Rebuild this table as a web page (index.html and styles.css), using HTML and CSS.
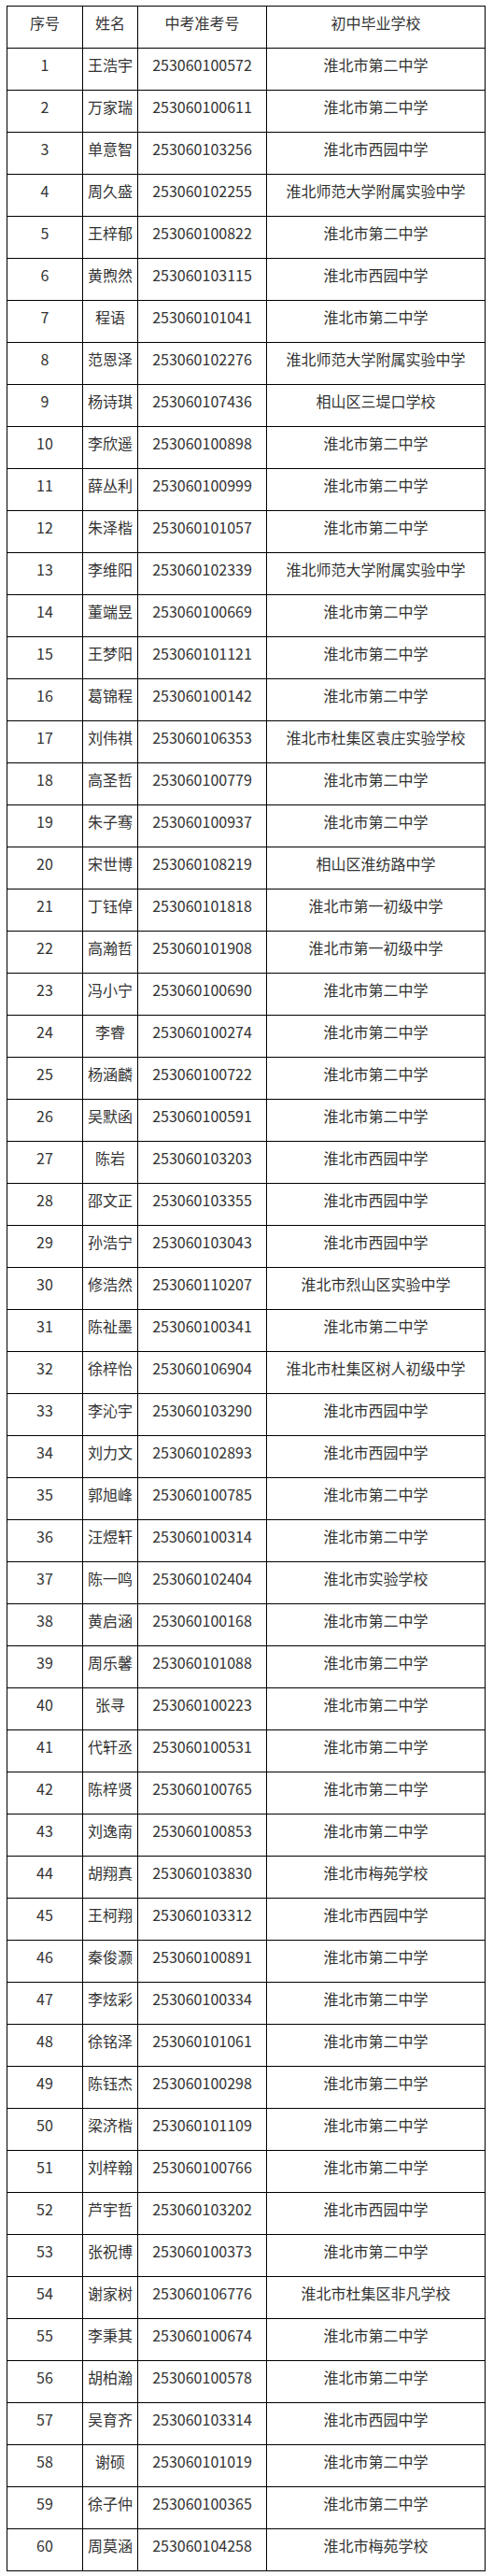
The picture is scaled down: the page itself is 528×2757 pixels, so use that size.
FILE: index.html
```html
<!DOCTYPE html>
<html lang="zh-CN">
<head>
<meta charset="utf-8">
<title>名单</title>
<link rel="stylesheet" href="styles.css">
</head>
<body>
<table class="roster">
<colgroup><col class="c1"><col class="c2"><col class="c3"><col class="c4"></colgroup>
<thead>
<tr><th>序号</th><th>姓名</th><th>中考准考号</th><th>初中毕业学校</th></tr>
</thead>
<tbody>
<tr><td>1</td><td>王浩宇</td><td>253060100572</td><td>淮北市第二中学</td></tr>
<tr><td>2</td><td>万家瑞</td><td>253060100611</td><td>淮北市第二中学</td></tr>
<tr><td>3</td><td>单意智</td><td>253060103256</td><td>淮北市西园中学</td></tr>
<tr><td>4</td><td>周久盛</td><td>253060102255</td><td>淮北师范大学附属实验中学</td></tr>
<tr><td>5</td><td>王梓郁</td><td>253060100822</td><td>淮北市第二中学</td></tr>
<tr><td>6</td><td>黄煦然</td><td>253060103115</td><td>淮北市西园中学</td></tr>
<tr><td>7</td><td>程语</td><td>253060101041</td><td>淮北市第二中学</td></tr>
<tr><td>8</td><td>范恩泽</td><td>253060102276</td><td>淮北师范大学附属实验中学</td></tr>
<tr><td>9</td><td>杨诗琪</td><td>253060107436</td><td>相山区三堤口学校</td></tr>
<tr><td>10</td><td>李欣遥</td><td>253060100898</td><td>淮北市第二中学</td></tr>
<tr><td>11</td><td>薛丛利</td><td>253060100999</td><td>淮北市第二中学</td></tr>
<tr><td>12</td><td>朱泽楷</td><td>253060101057</td><td>淮北市第二中学</td></tr>
<tr><td>13</td><td>李维阳</td><td>253060102339</td><td>淮北师范大学附属实验中学</td></tr>
<tr><td>14</td><td>董端昱</td><td>253060100669</td><td>淮北市第二中学</td></tr>
<tr><td>15</td><td>王梦阳</td><td>253060101121</td><td>淮北市第二中学</td></tr>
<tr><td>16</td><td>葛锦程</td><td>253060100142</td><td>淮北市第二中学</td></tr>
<tr><td>17</td><td>刘伟祺</td><td>253060106353</td><td>淮北市杜集区袁庄实验学校</td></tr>
<tr><td>18</td><td>高圣哲</td><td>253060100779</td><td>淮北市第二中学</td></tr>
<tr><td>19</td><td>朱子骞</td><td>253060100937</td><td>淮北市第二中学</td></tr>
<tr><td>20</td><td>宋世博</td><td>253060108219</td><td>相山区淮纺路中学</td></tr>
<tr><td>21</td><td>丁钰倬</td><td>253060101818</td><td>淮北市第一初级中学</td></tr>
<tr><td>22</td><td>高瀚哲</td><td>253060101908</td><td>淮北市第一初级中学</td></tr>
<tr><td>23</td><td>冯小宁</td><td>253060100690</td><td>淮北市第二中学</td></tr>
<tr><td>24</td><td>李睿</td><td>253060100274</td><td>淮北市第二中学</td></tr>
<tr><td>25</td><td>杨涵麟</td><td>253060100722</td><td>淮北市第二中学</td></tr>
<tr><td>26</td><td>吴默函</td><td>253060100591</td><td>淮北市第二中学</td></tr>
<tr><td>27</td><td>陈岩</td><td>253060103203</td><td>淮北市西园中学</td></tr>
<tr><td>28</td><td>邵文正</td><td>253060103355</td><td>淮北市西园中学</td></tr>
<tr><td>29</td><td>孙浩宁</td><td>253060103043</td><td>淮北市西园中学</td></tr>
<tr><td>30</td><td>修浩然</td><td>253060110207</td><td>淮北市烈山区实验中学</td></tr>
<tr><td>31</td><td>陈祉墨</td><td>253060100341</td><td>淮北市第二中学</td></tr>
<tr><td>32</td><td>徐梓怡</td><td>253060106904</td><td>淮北市杜集区树人初级中学</td></tr>
<tr><td>33</td><td>李沁宇</td><td>253060103290</td><td>淮北市西园中学</td></tr>
<tr><td>34</td><td>刘力文</td><td>253060102893</td><td>淮北市西园中学</td></tr>
<tr><td>35</td><td>郭旭峰</td><td>253060100785</td><td>淮北市第二中学</td></tr>
<tr><td>36</td><td>汪煜轩</td><td>253060100314</td><td>淮北市第二中学</td></tr>
<tr><td>37</td><td>陈一鸣</td><td>253060102404</td><td>淮北市实验学校</td></tr>
<tr><td>38</td><td>黄启涵</td><td>253060100168</td><td>淮北市第二中学</td></tr>
<tr><td>39</td><td>周乐馨</td><td>253060101088</td><td>淮北市第二中学</td></tr>
<tr><td>40</td><td>张寻</td><td>253060100223</td><td>淮北市第二中学</td></tr>
<tr><td>41</td><td>代轩丞</td><td>253060100531</td><td>淮北市第二中学</td></tr>
<tr><td>42</td><td>陈梓贤</td><td>253060100765</td><td>淮北市第二中学</td></tr>
<tr><td>43</td><td>刘逸南</td><td>253060100853</td><td>淮北市第二中学</td></tr>
<tr><td>44</td><td>胡翔真</td><td>253060103830</td><td>淮北市梅苑学校</td></tr>
<tr><td>45</td><td>王柯翔</td><td>253060103312</td><td>淮北市西园中学</td></tr>
<tr><td>46</td><td>秦俊灏</td><td>253060100891</td><td>淮北市第二中学</td></tr>
<tr><td>47</td><td>李炫彩</td><td>253060100334</td><td>淮北市第二中学</td></tr>
<tr><td>48</td><td>徐铭泽</td><td>253060101061</td><td>淮北市第二中学</td></tr>
<tr><td>49</td><td>陈钰杰</td><td>253060100298</td><td>淮北市第二中学</td></tr>
<tr><td>50</td><td>梁济楷</td><td>253060101109</td><td>淮北市第二中学</td></tr>
<tr><td>51</td><td>刘梓翰</td><td>253060100766</td><td>淮北市第二中学</td></tr>
<tr><td>52</td><td>芦宇哲</td><td>253060103202</td><td>淮北市西园中学</td></tr>
<tr><td>53</td><td>张祝博</td><td>253060100373</td><td>淮北市第二中学</td></tr>
<tr><td>54</td><td>谢家树</td><td>253060106776</td><td>淮北市杜集区非凡学校</td></tr>
<tr><td>55</td><td>李秉其</td><td>253060100674</td><td>淮北市第二中学</td></tr>
<tr><td>56</td><td>胡柏瀚</td><td>253060100578</td><td>淮北市第二中学</td></tr>
<tr><td>57</td><td>吴育齐</td><td>253060103314</td><td>淮北市西园中学</td></tr>
<tr><td>58</td><td>谢硕</td><td>253060101019</td><td>淮北市第二中学</td></tr>
<tr><td>59</td><td>徐子仲</td><td>253060100365</td><td>淮北市第二中学</td></tr>
<tr><td>60</td><td>周莫涵</td><td>253060104258</td><td>淮北市梅苑学校</td></tr>
</tbody>
</table>
</body>
</html>
```
FILE: styles.css
```css
html, body {
  margin: 0;
  padding: 0;
  background: #ffffff;
}

body {
  padding: 6px 0 0 7px;
  font-family: "Noto Sans CJK SC", "Noto Sans", sans-serif;
  font-size: 16px;
  color: #333333;
}

.roster {
  border-collapse: collapse;
  table-layout: fixed;
  width: 512px;
}

.c1 { width: 81px; }
.c2 { width: 59px; }
.c3 { width: 138px; }
.c4 { width: 234px; }

.roster th,
.roster td {
  border: 1px solid #000000;
  height: 45px;
  box-sizing: border-box;
  padding: 5px 0 0;
  vertical-align: top;
  text-align: center;
  font-weight: normal;
  line-height: 24px;
  white-space: nowrap;
}

.roster tr {
  height: 45px;
}
```
